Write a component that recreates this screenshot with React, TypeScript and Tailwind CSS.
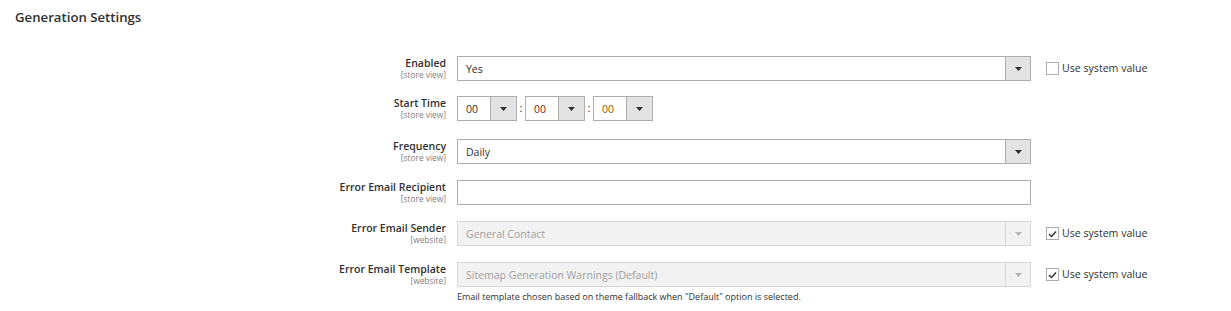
import React from "react";

const font = { fontFamily: '"Open Sans", "Liberation Sans", sans-serif' };

function Arrow({ disabled }: { disabled?: boolean }) {
  return (
    <svg width="7" height="4" viewBox="0 0 7 4">
      <path d="M0 0h7L3.5 4z" fill={disabled ? "#b5b5b5" : "#303030"} />
    </svg>
  );
}

function Label({ title, scope }: { title: string; scope: string }) {
  return (
    <div className="h-[25px] w-[446px] shrink-0 text-right">
      <div className="text-[10.5px] leading-[14px] font-semibold text-[#303030]">{title}</div>
      <div className="text-[8.4px] leading-[10px] text-[#808080]">{scope}</div>
    </div>
  );
}

function Select({ value, disabled }: { value: string; disabled?: boolean }) {
  return (
    <div
      className={`flex h-[25px] w-[574px] border ${
        disabled ? "border-[#d6d6d6] bg-[#f2f2f2]" : "border-[#adadad] bg-white"
      }`}
    >
      <div
        className={`flex-1 pl-[8px] text-[10.5px] leading-[24px] ${
          disabled ? "text-[#a0a0a0]" : "text-[#303030]"
        }`}
      >
        {value}
      </div>
      <div
        className={`flex w-[25px] items-center justify-center border-l ${
          disabled ? "border-[#d6d6d6] bg-[#f2f2f2]" : "border-[#adadad] bg-[#e3e3e3]"
        }`}
      >
        <Arrow disabled={disabled} />
      </div>
    </div>
  );
}

function TimeSelect({ color }: { color: string }) {
  return (
    <div className="flex h-[25px] w-[60px] border border-[#adadad] bg-white">
      <div className={`flex-1 pl-[8px] text-[10.5px] leading-[24px] ${color}`}>00</div>
      <div className="flex w-[26px] items-center justify-center border-l border-[#adadad] bg-[#e3e3e3]">
        <Arrow />
      </div>
    </div>
  );
}

function SystemValue({ checked }: { checked?: boolean }) {
  return (
    <div className="ml-[4px] flex h-[25px] items-start gap-[3px] pt-[6px]">
      <div className="flex h-[13px] w-[13px] items-center justify-center border border-[#adadad] bg-white">
        {checked && (
          <svg width="9" height="8" viewBox="0 0 9 8">
            <path d="M1 4l2.5 2.5L8 1.5" fill="none" stroke="#303030" strokeWidth="1.4" />
          </svg>
        )}
      </div>
      <span className="text-[10.6px] leading-[13px] text-[#303030]">Use system value</span>
    </div>
  );
}

export default function App() {
  return (
    <div className="h-[311px] w-[1231px] bg-white" style={font}>
      <div className="pl-[15px] pt-[8px] text-[13.2px] leading-[18px] font-semibold text-[#303030]">
        Generation Settings
      </div>
      <div className="mt-[30px] flex flex-col">
        <div className="flex h-[25px] gap-[11px]">
          <Label title="Enabled" scope="[store view]" />
          <Select value="Yes" />
          <SystemValue />
        </div>
        <div className="mt-[15px] flex h-[25px] gap-[11px]">
          <Label title="Start Time" scope="[store view]" />
          <div className="flex items-center">
            <TimeSelect color="text-[#303030]" />
            <span className="w-[8px] text-center text-[11px] text-[#303030]">:</span>
            <TimeSelect color="text-[#6b1d1d]" />
            <span className="w-[8px] text-center text-[11px] text-[#303030]">:</span>
            <TimeSelect color="text-[#8a5a00]" />
          </div>
        </div>
        <div className="mt-[18px] flex h-[25px] gap-[11px]">
          <Label title="Frequency" scope="[store view]" />
          <Select value="Daily" />
        </div>
        <div className="mt-[16px] flex h-[25px] gap-[11px]">
          <Label title="Error Email Recipient" scope="[store view]" />
          <div className="h-[25px] w-[574px] border border-[#adadad] bg-white" />
        </div>
        <div className="mt-[16px] flex h-[25px] gap-[11px]">
          <Label title="Error Email Sender" scope="[website]" />
          <Select value="General Contact" disabled />
          <SystemValue checked />
        </div>
        <div className="mt-[16px] flex gap-[11px]">
          <Label title="Error Email Template" scope="[website]" />
          <div className="flex flex-col">
            <Select value="Sitemap Generation Warnings (Default)" disabled />
            <div className="mt-[4px] text-[9px] leading-[12px] text-[#303030]">
              Email template chosen based on theme fallback when "Default" option is selected.
            </div>
          </div>
          <SystemValue checked />
        </div>
      </div>
    </div>
  );
}
